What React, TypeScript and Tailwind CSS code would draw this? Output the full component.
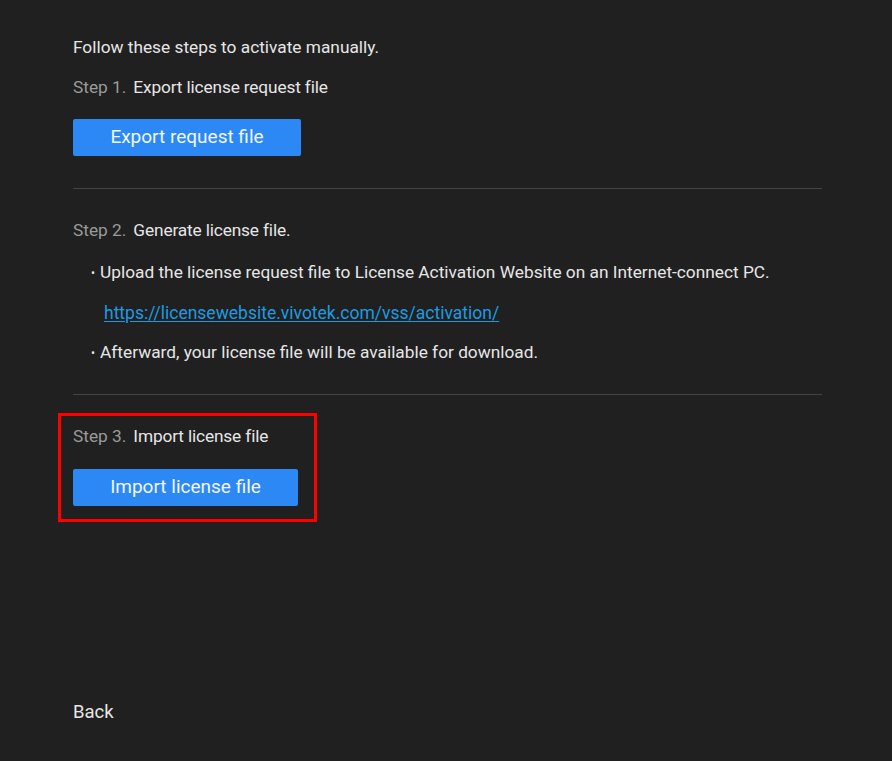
import React from "react";

const font = { fontFamily: "Roboto, 'Noto Sans', sans-serif" };

function StepTitle({ num, text }: { num: string; text: string }) {
  return (
    <div className="flex h-6 items-center text-[17.3px] text-[#e6e6e6]">
      <span className="mr-[7px] text-[#9a9a9a]">Step {num}.</span>
      <span className="tracking-[-0.15px]">{text}</span>
    </div>
  );
}

function BlueButton({ label, width }: { label: string; width: string }) {
  return (
    <button
      className={`h-[37px] ${width} rounded-[2px] bg-[#2b88f5] text-[19px] text-[#f2f6ff]`}
    >
      {label}
    </button>
  );
}

export default function App() {
  return (
    <div className="h-[761px] w-[892px] bg-[#202020]" style={font}>
      <div className="flex h-full flex-col px-[73px] pt-[35px]">
        <div className="h-6 text-[17.3px] text-[#e6e6e6]">
          Follow these steps to activate manually.
        </div>

        {/* Step 1 */}
        <div className="mt-[17px]">
          <StepTitle num="1" text="Export license request file" />
        </div>
        <div className="mt-[19px]">
          <BlueButton label="Export request file" width="w-[228px]" />
        </div>

        <div className="mt-[32px] mr-[-3px] h-px bg-[#444444]" />

        {/* Step 2 */}
        <div className="mt-[30px]">
          <StepTitle num="2" text="Generate license file." />
        </div>
        <div className="mt-[18px] flex h-6 items-center pl-[18px] text-[17.3px] text-[#e6e6e6]">
          <span className="mr-[5px] text-xs">•</span>
          Upload the license request file to License Activation Website on an
          Internet-connect PC.
        </div>
        <div className="mt-[16px] flex h-6 items-center pl-[31px]">
          <a
            href="#"
            className="text-[17.5px] text-[#1d9be0] underline underline-offset-2"
          >
            https://licensewebsite.vivotek.com/vss/activation/
          </a>
        </div>
        <div className="mt-[16px] flex h-6 items-center pl-[18px] text-[17.3px] text-[#e6e6e6]">
          <span className="mr-[5px] text-xs">•</span>
          Afterward, your license file will be available for download.
        </div>

        <div className="mt-[29px] mr-[-3px] h-px bg-[#444444]" />

        {/* Step 3, outlined */}
        <div className="mt-[18px] ml-[-15px] w-[259px] border-[3px] border-[#ff0000] pt-[9px] pb-[13px] pl-[12px]">
          <StepTitle num="3" text="Import license file" />
          <div className="mt-[20px]">
            <BlueButton label="Import license file" width="w-[225px]" />
          </div>
        </div>

        <div className="mt-[179px] flex h-6 items-center text-[18.5px] text-[#e6e6e6]">
          Back
        </div>
      </div>
    </div>
  );
}
